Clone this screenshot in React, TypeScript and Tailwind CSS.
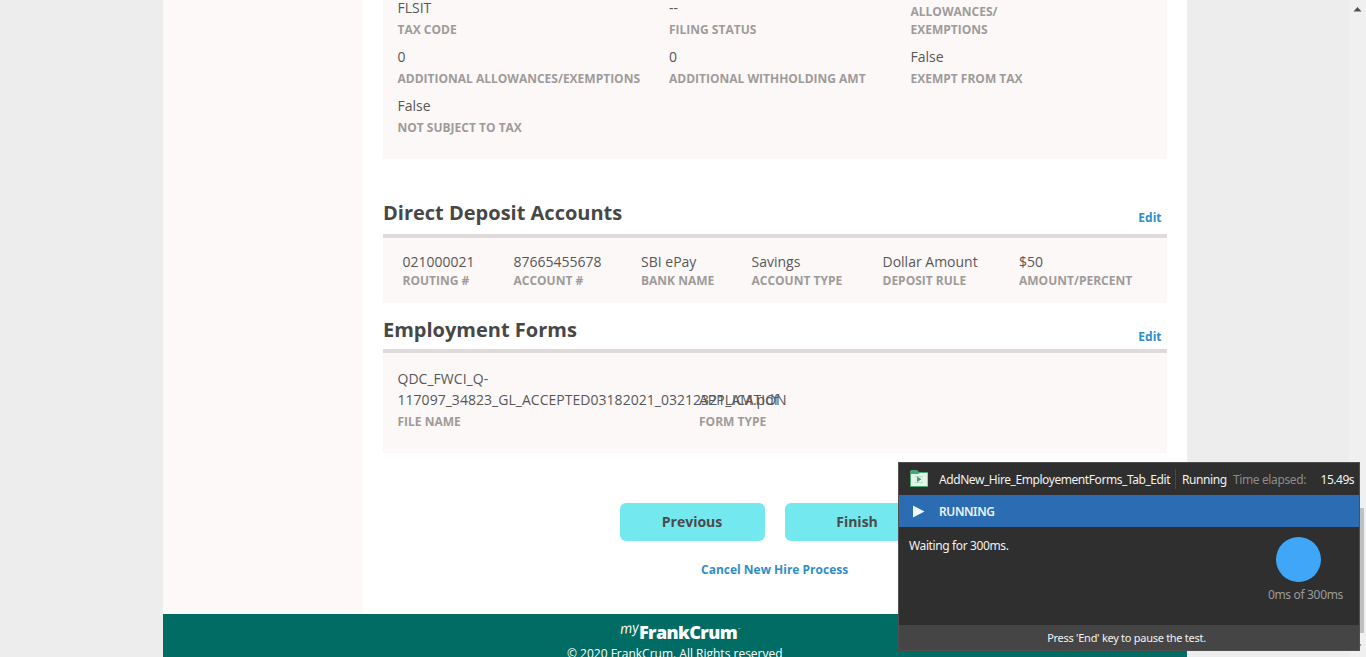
import type { ReactNode } from "react";

type Item = { value?: string; label: ReactNode };

const taxItems: Item[] = [
  { value: "FLSIT", label: "TAX CODE" },
  { value: "--", label: "FILING STATUS" },
  { label: <>ALLOWANCES/<br />EXEMPTIONS</> },
  { value: "0", label: "ADDITIONAL ALLOWANCES/EXEMPTIONS" },
  { value: "0", label: "ADDITIONAL WITHHOLDING AMT" },
  { value: "False", label: "EXEMPT FROM TAX" },
  { value: "False", label: "NOT SUBJECT TO TAX" },
];

const depositItems: Item[] = [
  { value: "021000021", label: "ROUTING #" },
  { value: "87665455678", label: "ACCOUNT #" },
  { value: "SBI ePay", label: "BANK NAME" },
  { value: "Savings", label: "ACCOUNT TYPE" },
  { value: "Dollar Amount", label: "DEPOSIT RULE" },
  { value: "$50", label: "AMOUNT/PERCENT" },
];

function Label({ children }: { children: ReactNode }) {
  return <div className="text-[12px] leading-[18px] font-bold whitespace-nowrap text-[#9f9b9a]">{children}</div>;
}

function SectionHeader({ title, className, editClass }: { title: string; className: string; editClass: string }) {
  return (
    <div className={`flex justify-between border-b-4 border-[#e0dadb] pr-[5.5px] ${className}`}>
      <h2 className="text-[20px] leading-[28px] font-bold text-[#484747]">{title}</h2>
      <a className={`text-[12px] leading-[18px] font-bold text-[#2e8fc8] ${editClass}`}>Edit</a>
    </div>
  );
}

function Scrollbar() {
  return (
    <div className="ml-auto flex w-[17px] flex-col items-center bg-[#f0f0f0] pt-[7px]">
      <svg width="9" height="5" viewBox="0 0 9 5"><path d="M4.5 0L8.5 4.5H.5Z" fill="#505050" /></svg>
      <div className="mt-[496px] h-[125px] w-[13px] bg-[#c1c1c1]" />
      <svg className="mt-[11px]" width="9" height="5" viewBox="0 0 9 5"><path d="M4.5 5L8.5 .5H.5Z" fill="#505050" /></svg>
    </div>
  );
}

function Runner() {
  return (
    <div className="absolute top-[462px] left-[898px] flex h-[189px] w-[462px] flex-col border border-[#505050] bg-[#2f2f2f] font-['Noto_Sans','Open_Sans',sans-serif] text-[12px] text-[#f2f2f2]">
      <div className="flex h-[32px] items-center pt-[2px] pr-[5px] pl-[11px] whitespace-nowrap">
        <svg className="mb-[3px]" width="18" height="17" viewBox="0 0 18 17">
          <path d="M0 1.5Q0 0 1.5 0H7L9 2H18V17H0Z" fill="#45a874" />
          <path d="M1 4H8L10 3H17.5V16H1Z" fill="#e3f3e8" />
          <path d="M5 6.5H13M5 12.5H13" stroke="#b9dcc6" fill="none" />
          <path d="M7 6.5L11.5 9.3L7 12.1Z" fill="#3da06c" />
        </svg>
        <span className="ml-[11px] w-[231px] tracking-[-0.43px]">AddNew_Hire_EmployementForms_Tab_Edit</span>
        <span className="mb-[2px] ml-[5px] h-[20px] w-px bg-[#484848]" />
        <span className="ml-[6px] w-[44px] tracking-[-0.42px]">Running</span>
        <span className="ml-[7px] tracking-[-0.38px] text-[#8c8c8c]">Time elapsed:</span>
        <span className="ml-auto tracking-[-0.5px]">15.49s</span>
      </div>
      <div className="flex h-[32px] items-center bg-[#2b6cb3] pl-[14px]">
        <svg width="12" height="13" viewBox="0 0 12 13"><path d="M0 .5L11.5 6.5L0 12.5Z" fill="#f1f8ff" /></svg>
        <span className="mt-[2px] ml-[14px] font-semibold tracking-[-0.4px] text-[#eaf4ff]">RUNNING</span>
      </div>
      <div className="flex flex-1 justify-between pt-[10px] pr-[16px] pl-[10px]">
        <span className="leading-[18px] tracking-[-0.38px]">Waiting for 300ms.</span>
        <div className="flex flex-col">
          <div className="ml-[8.5px] size-[45px] rounded-full bg-[#40a7f8]" />
          <span className="mt-[4px] leading-[18px] tracking-[-0.33px] text-[#9b9b9b]">0ms of 300ms</span>
        </div>
      </div>
      <div className="flex h-[25px] items-center justify-center bg-[#454545] pt-[1px] pr-[5px] text-[11px] tracking-[-0.28px]">Press 'End' key to pause the test.</div>
    </div>
  );
}

export default function App() {
  return (
    <div className="relative flex h-[657px] w-[1366px] overflow-hidden bg-[#ededed] font-['Open_Sans',sans-serif] text-[#444343]">
      <div className="ml-[163px] flex w-[1024px] flex-col">
        <div className="flex h-[614px] shrink-0">
          <aside className="w-[200px] shrink-0 bg-[#fdf9f8]" />
          <main className="w-[824px] bg-white px-[20px]">
            <section className="grid h-[159px] grid-cols-[271.5px_241.5px_auto] content-end bg-[#fcf8f7] pb-[16px] pl-[14.5px]">
              {taxItems.map((it, i) => (
                <div key={i} className="flex h-[49px] flex-col justify-end pb-[6px]">
                  {it.value && <div className="mb-px text-[14px] leading-[25px] text-[#585757]">{it.value}</div>}
                  <Label>{it.label}</Label>
                </div>
              ))}
            </section>

            <SectionHeader title="Direct Deposit Accounts" className="mt-[40px] h-[39px]" editClass="mt-[10px]" />
            <section className="grid h-[65px] grid-cols-[111px_127.5px_110.5px_131px_136.5px_auto] bg-[#fcf8f7] pt-[14px] pl-[19.5px]">
              {depositItems.map((it, i) => (
                <div key={i}>
                  <div className="text-[14px] leading-[20px] text-[#585757]">{it.value}</div>
                  <Label>{it.label}</Label>
                </div>
              ))}
            </section>

            <SectionHeader title="Employment Forms" className="mt-[13px] h-[37px]" editClass="mt-[12px]" />
            <section className="flex h-[100px] items-end bg-[#fcf8f7] pb-[22px] pl-[14.5px]">
              <div className="w-[301.5px]">
                <div className="text-[14px] leading-[21px] tracking-[0.03px] whitespace-nowrap text-[#585757]">
                  QDC_FWCI_Q-<br />117097_34823_GL_ACCEPTED03182021_03212321_AM.pdf
                </div>
                <div className="mt-[3px]"><Label>FILE NAME</Label></div>
              </div>
              <div>
                <div className="text-[14px] leading-[21px] text-[#585757]">APPLICATION</div>
                <div className="mt-[3px]"><Label>FORM TYPE</Label></div>
              </div>
            </section>

            <div className="mt-[50px] flex gap-[20px] pl-[237px] text-[14px] font-bold text-[#4b4a4a]">
              <button className="h-[38px] w-[145px] rounded-[6px] bg-[#74e8ef] pr-px pb-[2px]">Previous</button>
              <button className="h-[38px] w-[145px] rounded-[6px] bg-[#74e8ef] pr-px pb-[2px]">Finish</button>
            </div>
            <a className="mt-[20px] block pl-[318px] text-[12px] leading-[18px] font-bold text-[#2e8fc8]">Cancel New Hire Process</a>
          </main>
        </div>
        <footer className="flex h-[80px] shrink-0 flex-col bg-[#006c64] pt-[8px] text-white">
          <div className="flex h-[23px] items-start pl-[457px]">
            <span className="w-[19px] -rotate-6 text-[14px] leading-[12px] font-medium italic">my</span>
            <span className="text-[18px] leading-[20px] font-extrabold tracking-[-0.6px]">FrankCrum</span>
            <span className="mt-[5px] ml-[1px] text-[3px] leading-[4px]">™</span>
          </div>
          <div className="pl-[404px] text-[12px] leading-[18px] whitespace-nowrap">© 2020 FrankCrum. All Rights reserved</div>
        </footer>
      </div>
      <Scrollbar />
      <Runner />
    </div>
  );
}
